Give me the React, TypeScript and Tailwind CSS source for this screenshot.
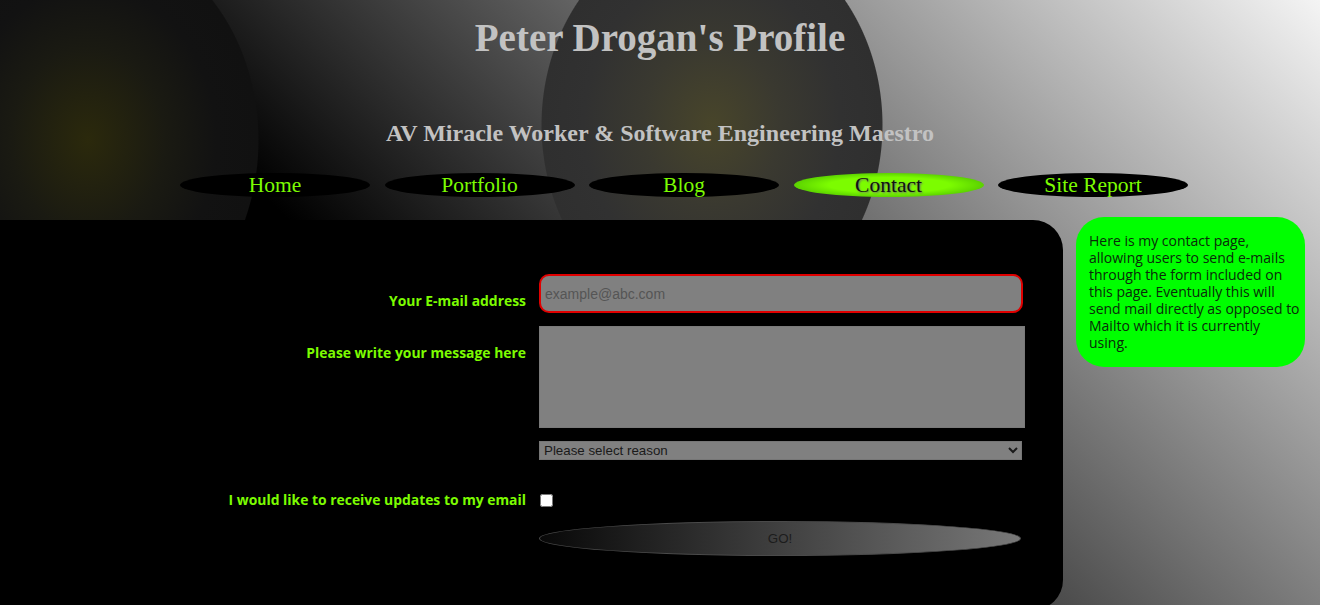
const navItems = ['Home', 'Portfolio', 'Blog', 'Contact', 'Site Report'];

export default function App() {
    return (
        <div className="h-[605px] w-full overflow-hidden bg-[image:radial-gradient(171px_205px_at_88px_140px,#2b290c_0%,#1a1a12_45%,#121212_75%,#111111_99.4%,transparent_100%),radial-gradient(171px_200px_at_712px_125px,#48452a_0%,#3a3930_40%,#313131_75%,#2f2f2f_99.4%,transparent_100%),linear-gradient(45deg,#000000_35%,#f4f4f4_100%)]">
            {/* Header */}
            <header className="pt-[15px] text-center font-['Liberation_Serif',serif] font-bold text-[#c2c2c2]">
                <h1 className="text-[39px] leading-[45px]">Peter Drogan's Profile</h1>
                <h2 className="mt-[59px] text-[24px] leading-[28px]">AV Miracle Worker &amp; Software Engineering Maestro</h2>
            </header>

            {/* Nav */}
            <nav className="mt-[26px] flex gap-[14.5px] pl-[180px] font-['Liberation_Serif',serif]">
                {navItems.map((item) =>
                    item === 'Contact' ? (
                        <a
                            key={item}
                            href="#"
                            className="flex h-[24px] w-[190px] items-center justify-center rounded-[50%] bg-[radial-gradient(ellipse_at_center,#7cfc00_45%,#5ad000_72%,#2f8f00_100%)] text-[21.5px] leading-[24px] text-[#111] [text-shadow:1px_1px_2px_#6a6a6a]"
                        >
                            {item}
                        </a>
                    ) : (
                        <a
                            key={item}
                            href="#"
                            className="flex h-[24px] w-[190px] items-center justify-center rounded-[50%] bg-black text-[21.5px] leading-[24px] text-[#7cfc00]"
                        >
                            {item}
                        </a>
                    )
                )}
            </nav>

            <div className="mt-[20px] flex items-start gap-[13px]">
                {/* Contact form panel */}
                <main className="mt-[3px] h-[390px] w-[1063px] shrink-0 rounded-r-[30px] bg-black pt-[54px] font-['Open_Sans',sans-serif] text-[13.9px] font-bold text-[#7cfc00]">
                    <div className="flex gap-[13px]">
                        <label className="w-[526px] pt-[18px] text-right leading-[17px]">Your E-mail address</label>
                        <input
                            type="email"
                            placeholder="example@abc.com"
                            className="h-[39px] w-[484px] rounded-[10px] border-2 border-[#e00000] bg-[#808080] px-[4px] font-['Liberation_Sans',sans-serif] text-[14px] font-normal text-[#222] placeholder:text-[#555]"
                        />
                    </div>

                    <div className="mt-[13px] flex gap-[13px]">
                        <label className="w-[526px] pt-[18px] text-right leading-[17px]">Please write your message here</label>
                        <textarea className="h-[102px] w-[486px] resize-none border border-[#7a7a7a] bg-[#808080]" />
                    </div>

                    <div className="mt-[13px] flex gap-[13px]">
                        <div className="w-[526px]" />
                        <select className="h-[19px] w-[483px] border border-[#767676] bg-[#808080] font-['Liberation_Sans',sans-serif] text-[13.33px] font-normal leading-[17px] text-[#1a1a1a]">
                            <option>Please select reason</option>
                            <option>General enquiry</option>
                            <option>Work opportunity</option>
                        </select>
                    </div>

                    <div className="mt-[31px] flex items-start gap-[13px]">
                        <label className="w-[526px] text-right leading-[17px]">I would like to receive updates to my email</label>
                        <input type="checkbox" className="m-0 ml-[1px] mt-[3px] h-[13px] w-[13px]" />
                    </div>

                    <div className="mt-[13px] flex gap-[13px]">
                        <div className="w-[526px]" />
                        <button className="h-[35px] w-[482px] rounded-[50%] border border-[#4a4a4a] bg-[linear-gradient(to_right,#080808,#787878)] font-['Liberation_Sans',sans-serif] text-[13.33px] font-normal text-[#1c1c1c]">
                            GO!
                        </button>
                    </div>
                </main>

                {/* Side note */}
                <aside className="h-[150px] w-[229px] rounded-[28px] bg-[#00ff00] pl-[13px] pr-[2px] pt-[15px] font-['Open_Sans',sans-serif] text-[14px] leading-[17px] text-[#0a2a0a]">
                    Here is my contact page,<br />
                    allowing users to send e-mails<br />
                    through the form included on<br />
                    this page. Eventually this will<br />
                    send mail directly as opposed to<br />
                    Mailto which it is currently<br />
                    using.
                </aside>
            </div>
        </div>
    );
}
